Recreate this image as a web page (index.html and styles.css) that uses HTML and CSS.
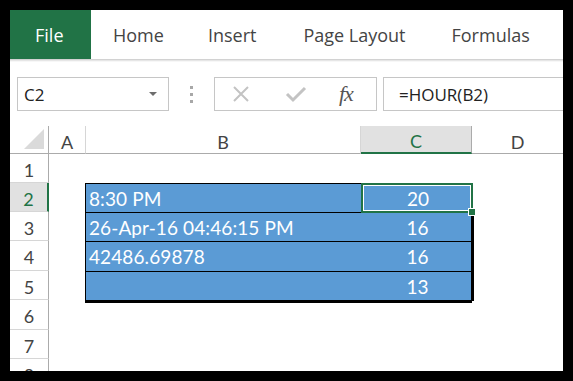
FILE: index.html
```html
<!DOCTYPE html>
<html>
<head>
<meta charset="utf-8">
<link rel="stylesheet" href="styles.css">
</head>
<body>
<div class="app">
  <div class="tabs">
    <div class="tab file">File</div>
    <div class="tab home">Home</div>
    <div class="tab insert">Insert</div>
    <div class="tab layout">Page Layout</div>
    <div class="tab formulas">Formulas</div>
  </div>
  <div class="tabshadow"></div>
  <div class="fbar">
    <div class="namebox"><span>C2</span><span class="caret"></span></div>
    <div class="dots"><i></i><i></i><i></i></div>
    <div class="btns">
      <svg class="ic-x" width="20" height="20" viewBox="0 0 20 20"><path d="M3 3 L17 17 M17 3 L3 17" stroke="#c3c3c3" stroke-width="2" fill="none"/></svg>
      <svg class="ic-ok" width="22" height="20" viewBox="0 0 22 20"><path d="M2 10 L8 16 L20 4" stroke="#c3c3c3" stroke-width="3" fill="none"/></svg>
      <span class="fx">fx</span>
    </div>
    <div class="formula">=HOUR(B2)</div>
  </div>
  <div class="sheet">
    <div class="corner"><span class="tri"></span></div>
    <div class="ch sepl">A</div>
    <div class="ch sepl">B</div>
    <div class="ch sel">C</div>
    <div class="ch">D</div>

    <div class="rh r1">1</div>
    <div class="rh r2 sel">2</div>
    <div class="rh r3">3</div>
    <div class="rh r4">4</div>
    <div class="rh r5">5</div>
    <div class="rh r6">6</div>
    <div class="rh r7">7</div>
    <div class="rh r8">8</div>

    <div class="table">
      <div class="row"><div class="cb">8:30 PM</div><div class="cc active">20</div></div>
      <div class="row"><div class="cb">26-Apr-16 04:46:15 PM</div><div class="cc">16</div></div>
      <div class="row"><div class="cb">42486.69878</div><div class="cc">16</div></div>
      <div class="row last"><div class="cb"></div><div class="cc">13</div></div>
    </div>
  </div>
</div>
</body>
</html>
```

FILE: styles.css
```css
* { box-sizing: border-box; }
html, body { margin: 0; padding: 0; background: #000; }
body { width: 573px; height: 381px; overflow: hidden; }
.app {
  margin: 10px 0 0 10px;
  width: 553px;
  height: 361px;
  background: #fff;
  overflow: hidden;
  font-family: "Open Sans", "Noto Sans", sans-serif;
}
.tabs { display: flex; height: 49px; align-items: stretch; }
.tab {
  font-size: 18px;
  color: #444;
  display: flex;
  align-items: center;
  padding-top: 1px;
  white-space: nowrap;
}
.tab.file { background: #217346; color: #fff; width: 81px; padding-left: 25px; }
.tab.home { margin-left: 22px; }
.tab.insert { margin-left: 44px; }
.tab.layout { margin-left: 47px; }
.tab.formulas { margin-left: 46px; }
.tabshadow {
  height: 3px;
  background: linear-gradient(#c8c8c8, #ececec 60%, #fff);
}
.fbar {
  display: flex;
  align-items: center;
  height: 64px;
  padding: 0 0 0 7px;
}
.namebox {
  width: 152px;
  height: 34px;
  border: 1px solid #c6c6c6;
  display: flex;
  align-items: center;
  justify-content: space-between;
  padding: 0 11px 0 6px;
  font-size: 17px;
  color: #222;
}
.caret {
  width: 0; height: 0;
  border-left: 4px solid transparent;
  border-right: 4px solid transparent;
  border-top: 4px solid #6d6d6d;
}
.dots {
  width: 45px;
  display: flex;
  flex-direction: column;
  align-items: center;
  gap: 4px;
}
.dots i { display: block; width: 3px; height: 3px; background: #a8a8a8; }
.btns {
  width: 163px;
  height: 34px;
  border: 1px solid #c6c6c6;
  display: flex;
  align-items: center;
  padding-left: 16px;
}
.ic-ok { margin-left: 34px; }
.fx {
  margin-left: 32px;
  font-family: "Liberation Serif", serif;
  font-style: italic;
  font-size: 22px;
  color: #555;
  letter-spacing: -1px;
}
.formula {
  margin-left: 6px;
  flex: 1;
  height: 34px;
  border: 1px solid #c6c6c6;
  border-right: none;
  display: flex;
  align-items: center;
  padding-left: 15px;
  font-size: 17px;
  color: #222;
}
.sheet {
  display: grid;
  grid-template-columns: 39px 37px 275px 111px 1fr;
  grid-template-rows: 28px 29px 29px 29px 30px 29px 30px 29px 29px;
  font-family: "Lato", "Open Sans", sans-serif;
}
.corner {
  grid-column: 1; grid-row: 1;
  border-right: 1px solid #ababab;
  border-bottom: 1px solid #ababab;
  position: relative;
}
.tri {
  position: absolute;
  right: 4px; bottom: 4px;
  width: 0; height: 0;
  border-left: 20px solid transparent;
  border-bottom: 20px solid #dadada;
}
.ch {
  border-bottom: 1px solid #ababab;
  display: flex;
  align-items: center;
  justify-content: center;
  font-size: 18px;
  color: #444;
  padding-top: 4px;
}
.ch.sepl { border-right: 1px solid #d6d6d6; }
.ch.sel { background: #e1e1e1; color: #217346; border-bottom: 2px solid #217346; border-right: 1px solid #ababab; }
.rh {
  grid-column: 1;
  border-right: 1px solid #ababab;
  border-bottom: 1px solid #d6d6d6;
  display: flex;
  align-items: center;
  justify-content: center;
  font-size: 18px;
  color: #444;
  padding-top: 3px;
  overflow: hidden;
}
.rh.sel { background: #e1e1e1; color: #217346; border-right: 2px solid #217346; }
.r1 { grid-row: 2; } .r2 { grid-row: 3; } .r3 { grid-row: 4; } .r4 { grid-row: 5; }
.r5 { grid-row: 6; } .r6 { grid-row: 7; } .r7 { grid-row: 8; } .r8 { grid-row: 9; }
.table {
  grid-column: 3 / 5;
  grid-row: 3 / 7;
  margin-left: -1px;
  display: grid;
  grid-template-rows: 29px 29px 30px 29px;
  border-left: 1px solid #000;
  border-top: 1px solid #000;
  border-bottom: 3px solid #000;
  background: #5b9bd5;
  height: 120px;
}
.row {
  display: grid;
  grid-template-columns: 276px 1fr;
  border-bottom: 1px solid #000;
}
.row.last { border-bottom: none; }
.row + .row .cc { border-right: 3px solid #000; }
.row + .row { margin-right: -2px; }
.cb, .cc {
  color: #fff;
  font-size: 19px;
  display: flex;
  align-items: center;
}
.cb { padding-left: 3px; white-space: nowrap; letter-spacing: 0.1px; }
.cc { justify-content: center; padding-left: 2px; }
.cc.active {
  position: relative;
  outline: 2px solid #217346;
  outline-offset: -1px;
  box-shadow: inset 0 0 0 2px #fff;
}
.cc.active::after {
  content: "";
  position: absolute;
  right: -4px; bottom: -4px;
  width: 6px; height: 6px;
  background: #217346;
  border: 1px solid #fff;
}
```
